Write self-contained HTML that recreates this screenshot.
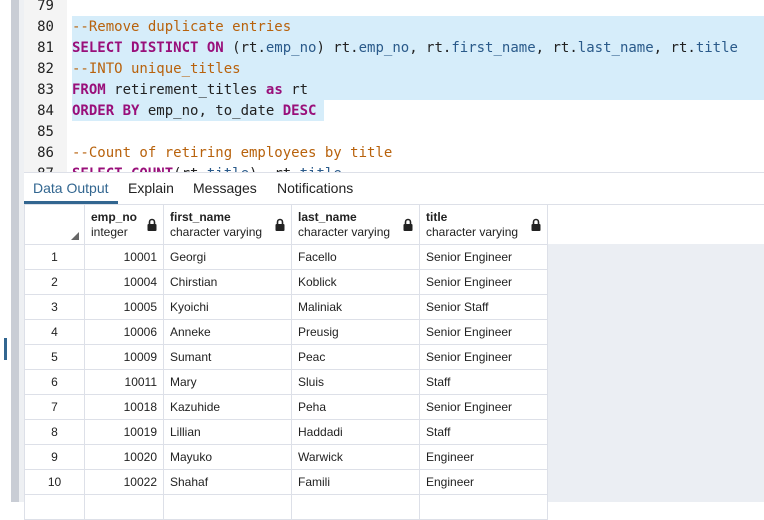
<!DOCTYPE html><html><head><style>
body{margin:0;width:764px;height:502px;overflow:hidden;background:#fff;position:relative;font-family:"Liberation Sans",Arial,sans-serif}
.a{position:absolute}
.code{font-family:"DejaVu Sans Mono",monospace;font-size:14px;line-height:21px;white-space:pre}
.ln{position:absolute;left:24px;width:43px;text-align:center;color:#222}
.c{color:#b8620c}.k{color:#990f7a;font-weight:bold}.i{color:#2a5a8a}.t{color:#222}
table{border-collapse:collapse;font-size:12px;color:#222;table-layout:fixed}
td{border:1px solid #dde0e8;padding:0 6px;overflow:hidden;white-space:nowrap}
tr{height:25px}
.lk{position:absolute;right:6px;top:13px}
</style></head><body>
<div class="a" style="left:11px;top:0;width:8px;height:502px;background:#c9cdd5"></div>
<div class="a" style="left:19px;top:0;width:5px;height:502px;background:#eef0f3"></div>
<div class="a" style="left:4px;top:338px;width:3px;height:22px;background:#326690"></div>
<div class="a" style="left:24px;top:0;width:43px;height:172px;background:#f4f4f4"></div>
<div class="a" style="left:72px;top:16px;width:692px;height:84px;background:#d6edfa"></div>
<div class="a" style="left:72px;top:100px;width:252px;height:21px;background:#d6edfa"></div>
<div class="code">
<div class="ln" style="top:-4px">79</div>
<div class="ln" style="top:17px">80</div>
<div class="ln" style="top:38px">81</div>
<div class="ln" style="top:59px">82</div>
<div class="ln" style="top:80px">83</div>
<div class="ln" style="top:101px">84</div>
<div class="ln" style="top:122px">85</div>
<div class="ln" style="top:143px">86</div>
<div class="ln" style="top:164px">87</div>
<div class="a" style="left:72px;top:17px"><span class="c">--Remove duplicate entries</span></div>
<div class="a" style="left:72px;top:38px"><span class="k">SELECT DISTINCT ON</span> <span class="t">(rt.</span><span class="i">emp_no</span><span class="t">) rt.</span><span class="i">emp_no</span><span class="t">, rt.</span><span class="i">first_name</span><span class="t">, rt.</span><span class="i">last_name</span><span class="t">, rt.</span><span class="i">title</span></div>
<div class="a" style="left:72px;top:59px"><span class="c">--INTO unique_titles</span></div>
<div class="a" style="left:72px;top:80px"><span class="k">FROM</span> <span class="t">retirement_titles</span> <span class="k">as</span> <span class="t">rt</span></div>
<div class="a" style="left:72px;top:101px"><span class="k">ORDER BY</span> <span class="t">emp_no, to_date</span> <span class="k">DESC</span></div>
<div class="a" style="left:72px;top:143px"><span class="c">--Count of retiring employees by title</span></div>
<div class="a" style="left:72px;top:164px"><span class="k">SELECT COUNT</span><span class="t">(rt.</span><span class="i">title</span><span class="t">), rt.</span><span class="i">title</span></div>
</div>
<div class="a" style="left:24px;top:172px;width:740px;height:330px;background:#fff;border-top:1px solid #dde0e8"></div>
<div class="a" style="left:24px;top:173px;width:740px;height:31px;font-size:14px;color:#222;line-height:30px">
<span class="a" style="left:9px;color:#326690">Data Output</span><span class="a" style="left:104px">Explain</span><span class="a" style="left:169px">Messages</span><span class="a" style="left:253px">Notifications</span></div>
<div class="a" style="left:24px;top:201px;width:94px;height:3px;background:#326690"></div>
<div class="a" style="left:24px;top:204px;width:740px;height:1px;background:#dde0e8"></div>
<div class="a" style="left:547px;top:244px;width:217px;height:258px;background:#ebeef3"></div>
<table class="a" style="left:24px;top:204px;width:524px">
<colgroup><col style="width:60px"><col style="width:79px"><col style="width:128px"><col style="width:128px"><col style="width:128px"></colgroup>
<tr style="height:40px"><td style="position:relative"><div class="a" style="right:5px;bottom:4px;width:0;height:0;border-left:8px solid transparent;border-bottom:8px solid #666"></div></td>
<td style="position:relative;line-height:15px"><b>emp_no</b><br>integer<svg class="lk" width="10" height="13" viewBox="0 0 10 13"><path d="M2.5 6V4a2.5 2.5 0 0 1 5 0v2" fill="none" stroke="#222" stroke-width="1.6"/><rect x="0.5" y="6" width="9" height="7" rx="1" fill="#222"/></svg></td>
<td style="position:relative;line-height:15px"><b>first_name</b><br>character varying<svg class="lk" width="10" height="13" viewBox="0 0 10 13"><path d="M2.5 6V4a2.5 2.5 0 0 1 5 0v2" fill="none" stroke="#222" stroke-width="1.6"/><rect x="0.5" y="6" width="9" height="7" rx="1" fill="#222"/></svg></td>
<td style="position:relative;line-height:15px"><b>last_name</b><br>character varying<svg class="lk" width="10" height="13" viewBox="0 0 10 13"><path d="M2.5 6V4a2.5 2.5 0 0 1 5 0v2" fill="none" stroke="#222" stroke-width="1.6"/><rect x="0.5" y="6" width="9" height="7" rx="1" fill="#222"/></svg></td>
<td style="position:relative;line-height:15px"><b>title</b><br>character varying<svg class="lk" width="10" height="13" viewBox="0 0 10 13"><path d="M2.5 6V4a2.5 2.5 0 0 1 5 0v2" fill="none" stroke="#222" stroke-width="1.6"/><rect x="0.5" y="6" width="9" height="7" rx="1" fill="#222"/></svg></td></tr>
<tr><td align=center>1</td><td align=right>10001</td><td>Georgi</td><td>Facello</td><td>Senior Engineer</td></tr>
<tr><td align=center>2</td><td align=right>10004</td><td>Chirstian</td><td>Koblick</td><td>Senior Engineer</td></tr>
<tr><td align=center>3</td><td align=right>10005</td><td>Kyoichi</td><td>Maliniak</td><td>Senior Staff</td></tr>
<tr><td align=center>4</td><td align=right>10006</td><td>Anneke</td><td>Preusig</td><td>Senior Engineer</td></tr>
<tr><td align=center>5</td><td align=right>10009</td><td>Sumant</td><td>Peac</td><td>Senior Engineer</td></tr>
<tr><td align=center>6</td><td align=right>10011</td><td>Mary</td><td>Sluis</td><td>Staff</td></tr>
<tr><td align=center>7</td><td align=right>10018</td><td>Kazuhide</td><td>Peha</td><td>Senior Engineer</td></tr>
<tr><td align=center>8</td><td align=right>10019</td><td>Lillian</td><td>Haddadi</td><td>Staff</td></tr>
<tr><td align=center>9</td><td align=right>10020</td><td>Mayuko</td><td>Warwick</td><td>Engineer</td></tr>
<tr><td align=center>10</td><td align=right>10022</td><td>Shahaf</td><td>Famili</td><td>Engineer</td></tr>
<tr><td></td><td></td><td></td><td></td><td></td></tr>
</table>
</body></html>
